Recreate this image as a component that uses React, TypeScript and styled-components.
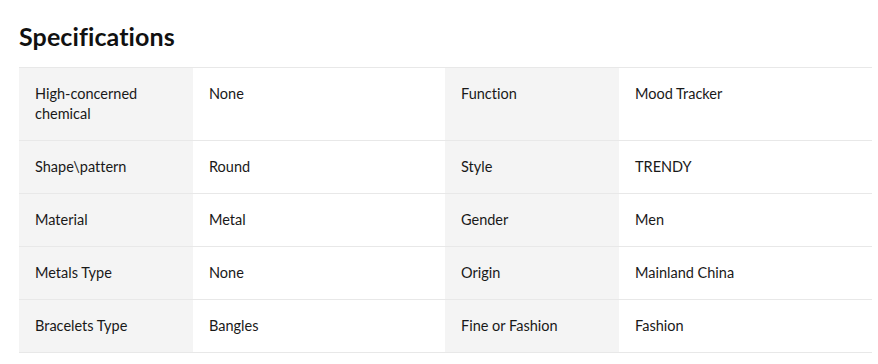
import React from "react";
import styled, { createGlobalStyle } from "styled-components";

const Global = createGlobalStyle`
  html, body { margin: 0; padding: 0; background: #fff; }
  body {
    font-family: Lato, "Noto Sans", sans-serif;
    color: #191919;
    font-variant-ligatures: none;
  }
`;

const Page = styled.section`
  padding: 22px 6px 0 19px;
`;

const Title = styled.h2`
  margin: 0 0 17px;
  font-size: 25px;
  line-height: 28px;
  font-weight: 700;
  color: #111;
  letter-spacing: 0.1px;
`;

const Table = styled.div`
  display: grid;
  grid-template-columns: 174px 252px 174px 1fr;
  border-top: 1px solid #e8e8e8;
`;

const Cell = styled.div<{ $label?: boolean }>`
  padding: 16px;
  font-size: 14.5px;
  line-height: 20px;
  background: ${(p) => (p.$label ? "#f4f4f4" : "#fff")};
  border-bottom: 1px solid #e8e8e8;
  color: #191919;
`;

const rows: [string, string, string, string][] = [
  ["High-concerned chemical", "None", "Function", "Mood Tracker"],
  ["Shape\\pattern", "Round", "Style", "TRENDY"],
  ["Material", "Metal", "Gender", "Men"],
  ["Metals Type", "None", "Origin", "Mainland China"],
  ["Bracelets Type", "Bangles", "Fine or Fashion", "Fashion"],
];

export default function App() {
  return (
    <>
      <Global />
      <Page>
        <Title>Specifications</Title>
        <Table>
          {rows.map((r, i) => (
            <React.Fragment key={i}>
              <Cell $label>{r[0]}</Cell>
              <Cell>{r[1]}</Cell>
              <Cell $label>{r[2]}</Cell>
              <Cell>{r[3]}</Cell>
            </React.Fragment>
          ))}
        </Table>
      </Page>
    </>
  );
}
